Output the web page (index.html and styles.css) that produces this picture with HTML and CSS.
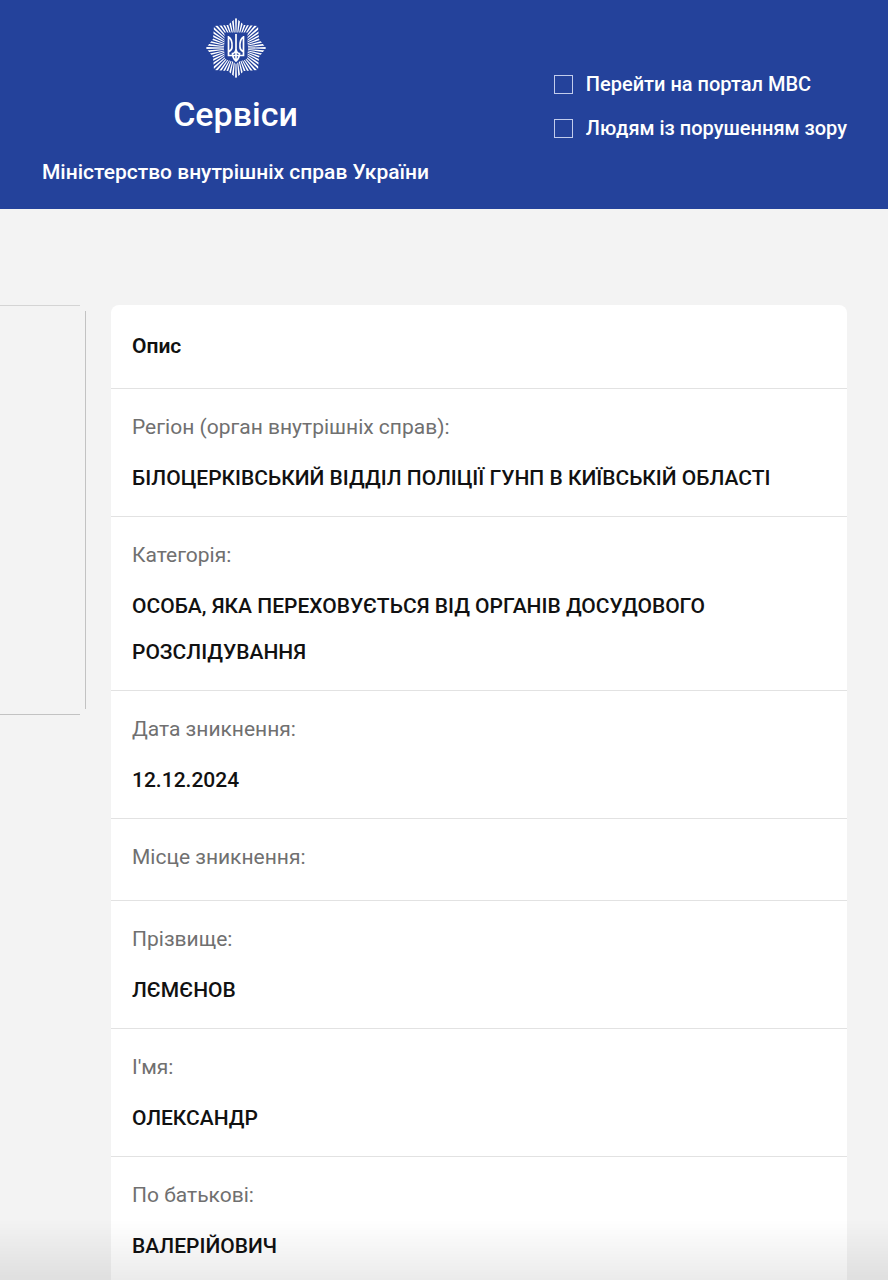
FILE: index.html
```html
<!DOCTYPE html>
<html lang="uk">
<head>
<meta charset="utf-8">
<meta name="viewport" content="width=device-width, initial-scale=1">
<title>Сервіси МВС</title>
<link rel="stylesheet" href="styles.css">
</head>
<body>
<header class="header">
  <div class="brand">
    <svg class="emblem" viewBox="0 0 60 60" aria-hidden="true">
      <defs>
        <clipPath id="star"><path d="M30 0 38 7 52 8 53 21 60 30 53 39 52 52 38 53 30 60 22 53 8 52 7 39 0 30 7 21 8 8 22 7Z"/></clipPath>
      </defs>
      <circle cx="30" cy="30" r="22" fill="none" stroke="#fff" stroke-width="20" pathLength="208" stroke-dasharray="2.200 1.800" stroke-dashoffset="1.100" clip-path="url(#star)"/>
      <path d="M18.500 14.500H41.500V38Q41.500 41 38.500 42L33 43.500 30 46 27 43.500 21.500 42Q18.500 41 18.500 38Z" fill="#24429b"/>
      <path d="M30 16V32M22.500 18V37.500H37.500V18M22.500 19Q26.500 21 26 29Q26 32 23 33.500M37.500 19Q33.500 21 34 29Q34 32 37 33.500M30 31Q29.500 35 26.500 35.500Q26.500 40 30 43Q33.500 40 33.500 35.500Q30.500 35 30 31V43" fill="none" stroke="#fff" stroke-width="1.700"/>
    </svg>
    <h1 class="brand-title">Сервіси</h1>
    <p class="brand-subtitle">Міністерство внутрішніх справ України</p>
  </div>
  <div class="options">
    <label class="option"><input class="option-box" type="checkbox">Перейти на портал МВС</label>
    <label class="option"><input class="option-box" type="checkbox">Людям із порушенням зору</label>
  </div>
</header>
<main class="main">
  <div class="photo"></div>
  <section class="card">
    <h2 class="card-title">Опис</h2>
    <dl class="details">
      <div class="row"><dt class="label">Регіон (орган внутрішніх справ):</dt><dd class="value">БІЛОЦЕРКІВСЬКИЙ ВІДДІЛ ПОЛІЦІЇ ГУНП В КИЇВСЬКІЙ ОБЛАСТІ</dd></div>
      <div class="row"><dt class="label">Категорія:</dt><dd class="value">ОСОБА, ЯКА ПЕРЕХОВУЄТЬСЯ ВІД ОРГАНІВ ДОСУДОВОГО РОЗСЛІДУВАННЯ</dd></div>
      <div class="row"><dt class="label">Дата зникнення:</dt><dd class="value">12.12.2024</dd></div>
      <div class="row"><dt class="label">Місце зникнення:</dt><dd class="value"></dd></div>
      <div class="row"><dt class="label">Прізвище:</dt><dd class="value">ЛЄМЄНОВ</dd></div>
      <div class="row"><dt class="label">І'мя:</dt><dd class="value">ОЛЕКСАНДР</dd></div>
      <div class="row"><dt class="label">По батькові:</dt><dd class="value">ВАЛЕРІЙОВИЧ</dd></div>
    </dl>
  </section>
</main>
<div class="shade"></div>
</body>
</html>
```
FILE: styles.css
```css
* {
  box-sizing: border-box;
}

body {
  margin: 0;
  background: #f3f3f3;
  color: #111;
  font-family: Roboto, "Liberation Sans", sans-serif;
  font-size: 21px;
}

h1, h2, p, dl, dd {
  margin: 0;
}

.header {
  display: flex;
  justify-content: space-between;
  align-items: flex-start;
  padding: 18px 41px 19px 42px;
  background: #24429b;
  color: #fff;
}

.brand {
  display: flex;
  flex-direction: column;
  align-items: center;
}

.emblem {
  width: 60px;
  height: 60px;
}

.brand-title {
  padding: 12px 0 16px;
  font-size: 34px;
  font-weight: 500;
  line-height: 48px;
}

.brand-subtitle {
  font-size: 21px;
  font-weight: 500;
  line-height: 36px;
}

.options {
  display: flex;
  flex-direction: column;
  gap: 4px;
  padding-top: 46px;
}

.option {
  display: flex;
  align-items: center;
  gap: 13px;
  font-size: 20px;
  font-weight: 500;
  line-height: 40px;
}

.option-box {
  appearance: none;
  width: 19px;
  height: 19px;
  margin: 0;
  border: 1px solid #c2ccec;
}

.main {
  display: grid;
  grid-template-columns: 86px 1fr;
  gap: 25px;
  align-items: start;
  padding: 96px 41px 0 0;
}

.photo {
  height: 410px;
  background:
    linear-gradient(#d4d4d4, #d4d4d4) 0 0 / calc(100% - 6px) 1px no-repeat,
    linear-gradient(#c2c2c2, #c2c2c2) 0 100% / calc(100% - 6px) 1px no-repeat,
    linear-gradient(#c2c2c2, #c2c2c2) 100% 50% / 1px calc(100% - 12px) no-repeat;
}

.card {
  border-radius: 8px 8px 0 0;
  background: #fff;
}

.card-title {
  padding: 18px 21px 19px;
  font-size: 21px;
  font-weight: 600;
  line-height: 46px;
}

.row {
  padding: 15px 21px;
  border-top: 1px solid #e2e2e2;
}

.label {
  padding-bottom: 5px;
  color: #707070;
  line-height: 46px;
}

.value {
  font-weight: 500;
  line-height: 46px;
}

.shade {
  position: fixed;
  right: 0;
  bottom: 0;
  left: 0;
  height: 60px;
  background: linear-gradient(rgba(0, 0, 0, 0), rgba(0, 0, 0, 0.08));
  pointer-events: none;
}
```
